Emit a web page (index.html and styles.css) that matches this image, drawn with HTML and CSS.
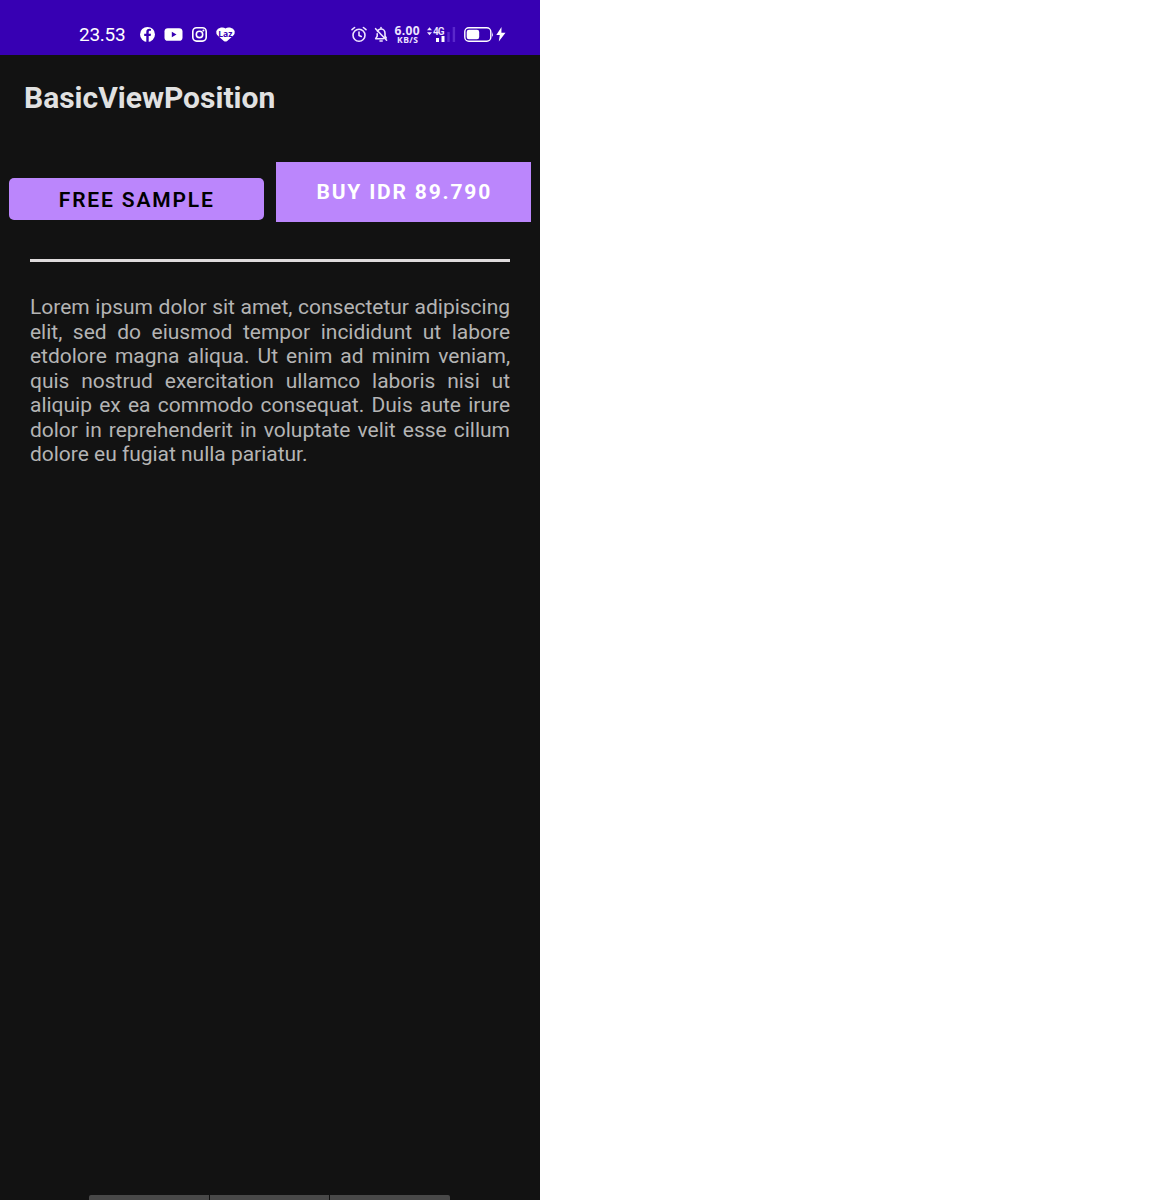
FILE: index.html
```html
<!DOCTYPE html>
<html lang="en">
<head>
<meta charset="utf-8">
<title>BasicViewPosition</title>
<link rel="stylesheet" href="styles.css">
</head>
<body>
<div class="phone">
  <header class="status">
    <span class="clock">23.53</span>
    <svg class="apps" width="98" height="20" viewBox="0 -.4 98 20" fill="#fff">
      <circle cx="9.5" cy="10" r="7.5"/>
      <path d="M8.3 17.5v-5.9H6.2V9.4h2.1V7.7c0-2.2 1.2-3.3 3.2-3.3l1.5.1v1.9h-1c-1 0-1.3.6-1.3 1.3v1.7H13l-.4 2.2h-1.9v5.9z" fill="#3700b3"/>
      <rect x="26.5" y="3.8" width="18" height="12.6" rx="3.4"/>
      <path d="M33.8 7.4l4.7 2.7-4.7 2.7z" fill="#3700b3"/>
      <g fill="none" stroke="#fff" stroke-width="1.6"><rect x="54.8" y="3.3" width="13.4" height="13.4" rx="3.8"/><circle cx="61.5" cy="10" r="3.2"/></g>
      <circle cx="65.4" cy="6.2" r="1"/>
      <path d="M83 3.2q2.5-.6 4.5.8 2-1.4 4.5-.8l3 1.2q2.2 1.6 1.6 4.8-.3 1.4-1.8 2.4l-5.6 4.9q-1.7 1.3-3.4 0l-5.6-4.9q-1.5-1-1.8-2.4-.6-3.2 1.6-4.8z"/>
      <text class="laz" x="80.3" y="12.2">Laz</text>
    </svg>
    <svg class="alerts" width="42" height="20" viewBox="0 -.2 42 20" fill="none" stroke="#eee4ff" stroke-width="1.6" stroke-linecap="round" stroke-linejoin="round">
      <circle cx="11" cy="11" r="6"/><path d="M11 7.8v3.5l2.3 1M4 5.5l2.6-2.2M18 5.5l-2.6-2.2"/>
      <path d="M29.5 7.2c.7-1.6 2-2.4 3.5-2.4 2.4 0 4 1.9 4 4.2v2.8l1.2 2M33 4.8V3.4M35.2 14.5h-7.5l1.5-2.5V9.5M27.6 4.5l11 11.5M32 16.8h2.2"/>
    </svg>
    <svg class="speed" width="28" height="22" viewBox="0 0 28 22" fill="#eee4ff">
      <text class="rate" x="0.5" y="11.6" textLength="25">6.00</text>
      <text class="unit" x="3" y="20.2" textLength="21">KB/S</text>
    </svg>
    <svg class="signal" width="80" height="20" viewBox="0 0 80 20" fill="#eee4ff">
      <path d="M0 6.2l2.5-3 2.5 3zM0 8.2l2.5 3 2.5-3z"/>
      <text class="network" x="6" y="10.5" textLength="11.5">4G</text>
      <path d="M9 14h3v4H9zM14.5 12h3v6h-3z" fill="#fff"/>
      <path d="M20.3 8h2.4v10h-2.4zM25.7 3h2.4v15h-2.4z" fill="#5a28cb"/>
      <rect x="37.8" y="3.8" width="26" height="13.4" rx="4" fill="none" stroke="#fff" stroke-width="1.4"/>
      <rect x="39.7" y="5.7" width="12.5" height="9.6" rx="2.2" fill="#fff"/>
      <path d="M65 8q1.8 2.5 0 5z"/>
      <path d="M74.5 3l-5.2 8h3.5l-1 6.5 6.7-8.7h-4.1z" fill="#fff"/>
    </svg>
  </header>
  <h1 class="title">BasicViewPosition</h1>
  <div class="actions">
    <button class="button sample">FREE SAMPLE</button>
    <button class="button buy">BUY IDR 89.790</button>
  </div>
  <hr class="divider">
  <p class="description">Lorem ipsum dolor sit amet, consectetur adipiscing elit, sed do eiusmod tempor incididunt ut labore etdolore magna aliqua. Ut enim ad minim veniam, quis nostrud exercitation ullamco laboris nisi ut aliquip ex ea commodo consequat. Duis aute irure dolor in reprehenderit in voluptate velit esse cillum dolore eu fugiat nulla pariatur.</p>
  <div class="navigation"><i></i><i></i><i></i></div>
</div>
</body>
</html>
```
FILE: styles.css
```css
* { box-sizing: border-box; }
body { margin: 0; background: #fff; font-family: Roboto, sans-serif; }
.phone { width: 540px; height: 1200px; background: #121212; display: flex; flex-direction: column; overflow: hidden; }
.status { height: 55px; flex: none; background: #3700b3; color: #fff; display: flex; align-items: center; padding: 13px 0 0 79px; }
.clock { width: 59px; font-size: 19px; letter-spacing: -.25px; line-height: 20px; padding-top: 1px; }
.status svg { flex: none; display: block; }
.laz { font: 700 8.5px "Open Sans", sans-serif; fill: #3700b3; }
.alerts { margin-left: 112px; }
.speed { margin-left: 4px; }
.rate { font: 700 12px "Open Sans", sans-serif; }
.unit { font: 700 8.5px "Open Sans", sans-serif; }
.signal { margin-left: 5px; }
.network { font: 600 10px Roboto, sans-serif; }
.title { margin: 25px 0 0 24px; font-size: 30px; line-height: 36px; font-weight: 700; color: #e1e1e1; }
.actions { display: flex; gap: 12px; padding: 0 9px; margin-top: 45px; height: 61px; }
.button { flex: 1; border: 0; padding: 2px 0 0 1px; background: #bb86fc; font-family: Roboto, sans-serif; font-size: 21px; letter-spacing: 1.8px; }
.sample { height: 42px; margin-top: 17px; border-radius: 5px; color: #000; font-weight: 600; letter-spacing: 1.85px; }
.buy { height: 60px; margin-top: .5px; padding: 0 0 0 2px; color: #fff; font-weight: 700; }
.divider { width: 480px; height: 3px; border: 0; margin: 37px 30px 0; background: #dedbdc; flex: none; }
.description { width: 480px; margin: 33.4px 30px 0; font-size: 21px; line-height: 24.5px; letter-spacing: -.02px; text-align: justify; color: #b4b4b4; }
.navigation { margin: auto 90px 0 89px; height: 5px; display: flex; gap: 1px; }
.navigation i { flex: 1; background: #484848; }
.navigation i:first-child { border-top-left-radius: 2px; }
.navigation i:last-child { border-top-right-radius: 2px; }
```
